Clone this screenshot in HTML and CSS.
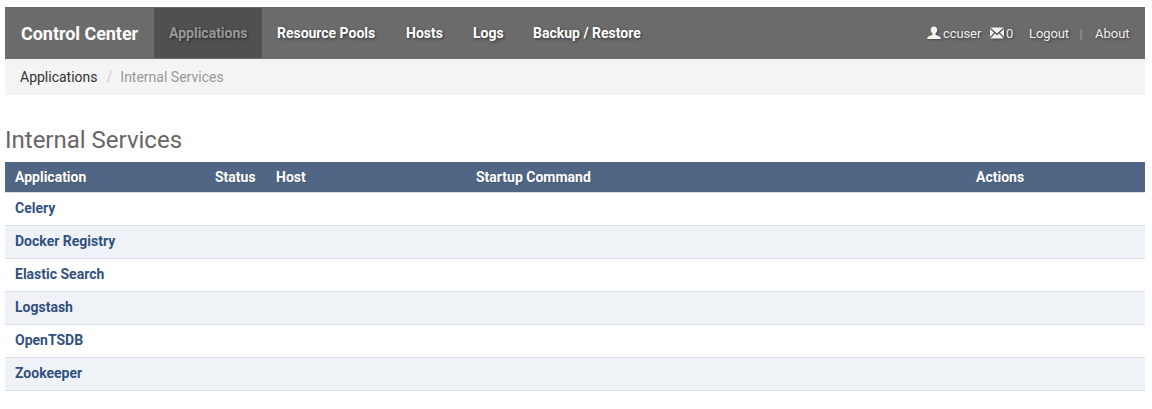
FILE: index.html
```html
<!DOCTYPE html>
<html lang="en">
<head>
<meta charset="utf-8">
<title>Control Center</title>
<link rel="stylesheet" href="styles.css">
</head>
<body>
<header class="navbar">
  <a class="brand">Control Center</a>
  <nav class="nav">
    <a class="nav-link active"><span class="t-apps">Applications</span></a>
    <a class="nav-link"><span class="t-pools">Resource Pools</span></a>
    <a class="nav-link"><span class="t-hosts">Hosts</span></a>
    <a class="nav-link"><span class="t-logs">Logs</span></a>
    <a class="nav-link"><span class="t-backup">Backup / Restore</span></a>
  </nav>
  <div class="account">
    <svg class="icon" width="14" height="14" viewBox="0 0 14 14"><path d="M7 .5C5 .5 3.700 1.800 3.700 3.700c0 1.500.6 2.700 1.700 3.600v1.400C4.700 9.500 1.900 10 1 10.700c-.6.500-.8 1.400-.8 2.300h13.600c0-.9-.2-1.800-.8-2.300-.9-.7-3.700-1.200-4.400-2V7.300c1.100-.9 1.700-2.100 1.700-3.600C10.300 1.800 9 .5 7 .5z"/></svg>
    <span class="user">ccuser</span>
    <svg class="icon mail" width="14" height="14" viewBox="0 0 14 14"><path d="M.3 1.500h13.400L7 7.500zM0 2.900l4 3.800-4 4.400zM14 2.900v8.200l-4-4.400zM4.900 7.600 7 9.400l2.100-1.800 4.500 4.900H.4z"/></svg>
    <span class="count">0</span>
    <span class="logout">Logout</span>
    <span class="divider"></span>
    <span class="about">About</span>
  </div>
</header>
<div class="breadcrumb"><a class="crumb">Applications</a><span class="slash">/</span><span class="current">Internal Services</span></div>
<h1 class="title">Internal Services</h1>
<table class="services">
  <thead><tr><th class="c-app">Application</th><th class="c-status">Status</th><th class="c-host">Host</th><th class="c-cmd">Startup Command</th><th>Actions</th></tr></thead>
  <tbody>
    <tr><td>Celery</td><td></td><td></td><td></td><td></td></tr>
    <tr><td>Docker Registry</td><td></td><td></td><td></td><td></td></tr>
    <tr><td>Elastic Search</td><td></td><td></td><td></td><td></td></tr>
    <tr><td>Logstash</td><td></td><td></td><td></td><td></td></tr>
    <tr><td>OpenTSDB</td><td></td><td></td><td></td><td></td></tr>
    <tr><td>Zookeeper</td><td></td><td></td><td></td><td></td></tr>
  </tbody>
</table>
</body>
</html>
```
FILE: styles.css
```css
* { box-sizing: border-box; }
body { margin: 0; padding: 7px 7px 0 5px; background: #fff; font: 14px/20px Roboto, sans-serif; color: #333; white-space: nowrap; }
.navbar { display: flex; align-items: center; height: 52px; background: #6b6b6b; color: #fff; }
.brand { width: 149px; padding: 2px 0 0 16px; font-size: 18px; font-weight: 700; letter-spacing: -.05px; }
.nav { display: flex; height: 50px; }
.nav-link { display: flex; align-items: center; padding: 0 15px; font-weight: 700; text-shadow: 1px 1px 3px rgba(0,0,0,.55); }
.active { background: #505050; color: #999; }
.t-apps { width: 78px; }
.t-pools { width: 99px; letter-spacing: -.02px; }
.t-hosts { width: 37px; }
.t-logs { width: 30px; }
.t-backup { width: 108px; }
.account { display: flex; align-items: center; margin-left: auto; width: 218px; padding-top: 2px; color: #eee; font-size: 13px; text-shadow: 1px 1px 3px rgba(0,0,0,.5); }
.icon { flex: none; fill: #f2f2f2; filter: drop-shadow(1px 1px 1px rgba(0,0,0,.35)); margin-top: -3px; }
.user { width: 49px; padding-left: 2px; letter-spacing: -.1px; }
.count { width: 25px; padding-left: 2px; }
.logout { width: 51px; letter-spacing: -.1px; }
.divider { width: 2px; height: 11px; background: #858585; margin-right: 13px; }
.breadcrumb { height: 36px; padding: 8px 15px; background: #f4f4f4; color: #999; }
.crumb { color: #333; }
.slash { padding: 0 8px 0 9px; color: #ccc; }
.title { margin: 30px 0 7px; font-size: 24px; line-height: 30px; font-weight: 400; color: #666; }
.services { width: 1140px; table-layout: fixed; border-collapse: separate; border-spacing: 0; border-bottom: 1px solid #dae0e7; }
th, td { text-align: left; padding: 0 10px; font-weight: 700; }
th { height: 30px; background: #516685; color: #fff; text-shadow: 1px 1px 1px rgba(0,0,0,.15); }
td { height: 33px; padding-bottom: 2px; border-top: 1px solid #dae0e7; color: #325180; }
tbody tr:nth-child(even) { background: #eff3f8; }
.c-app { width: 200px; }
.c-status { width: 61px; }
.c-host { width: 200px; }
.c-cmd { width: 500px; }
```
